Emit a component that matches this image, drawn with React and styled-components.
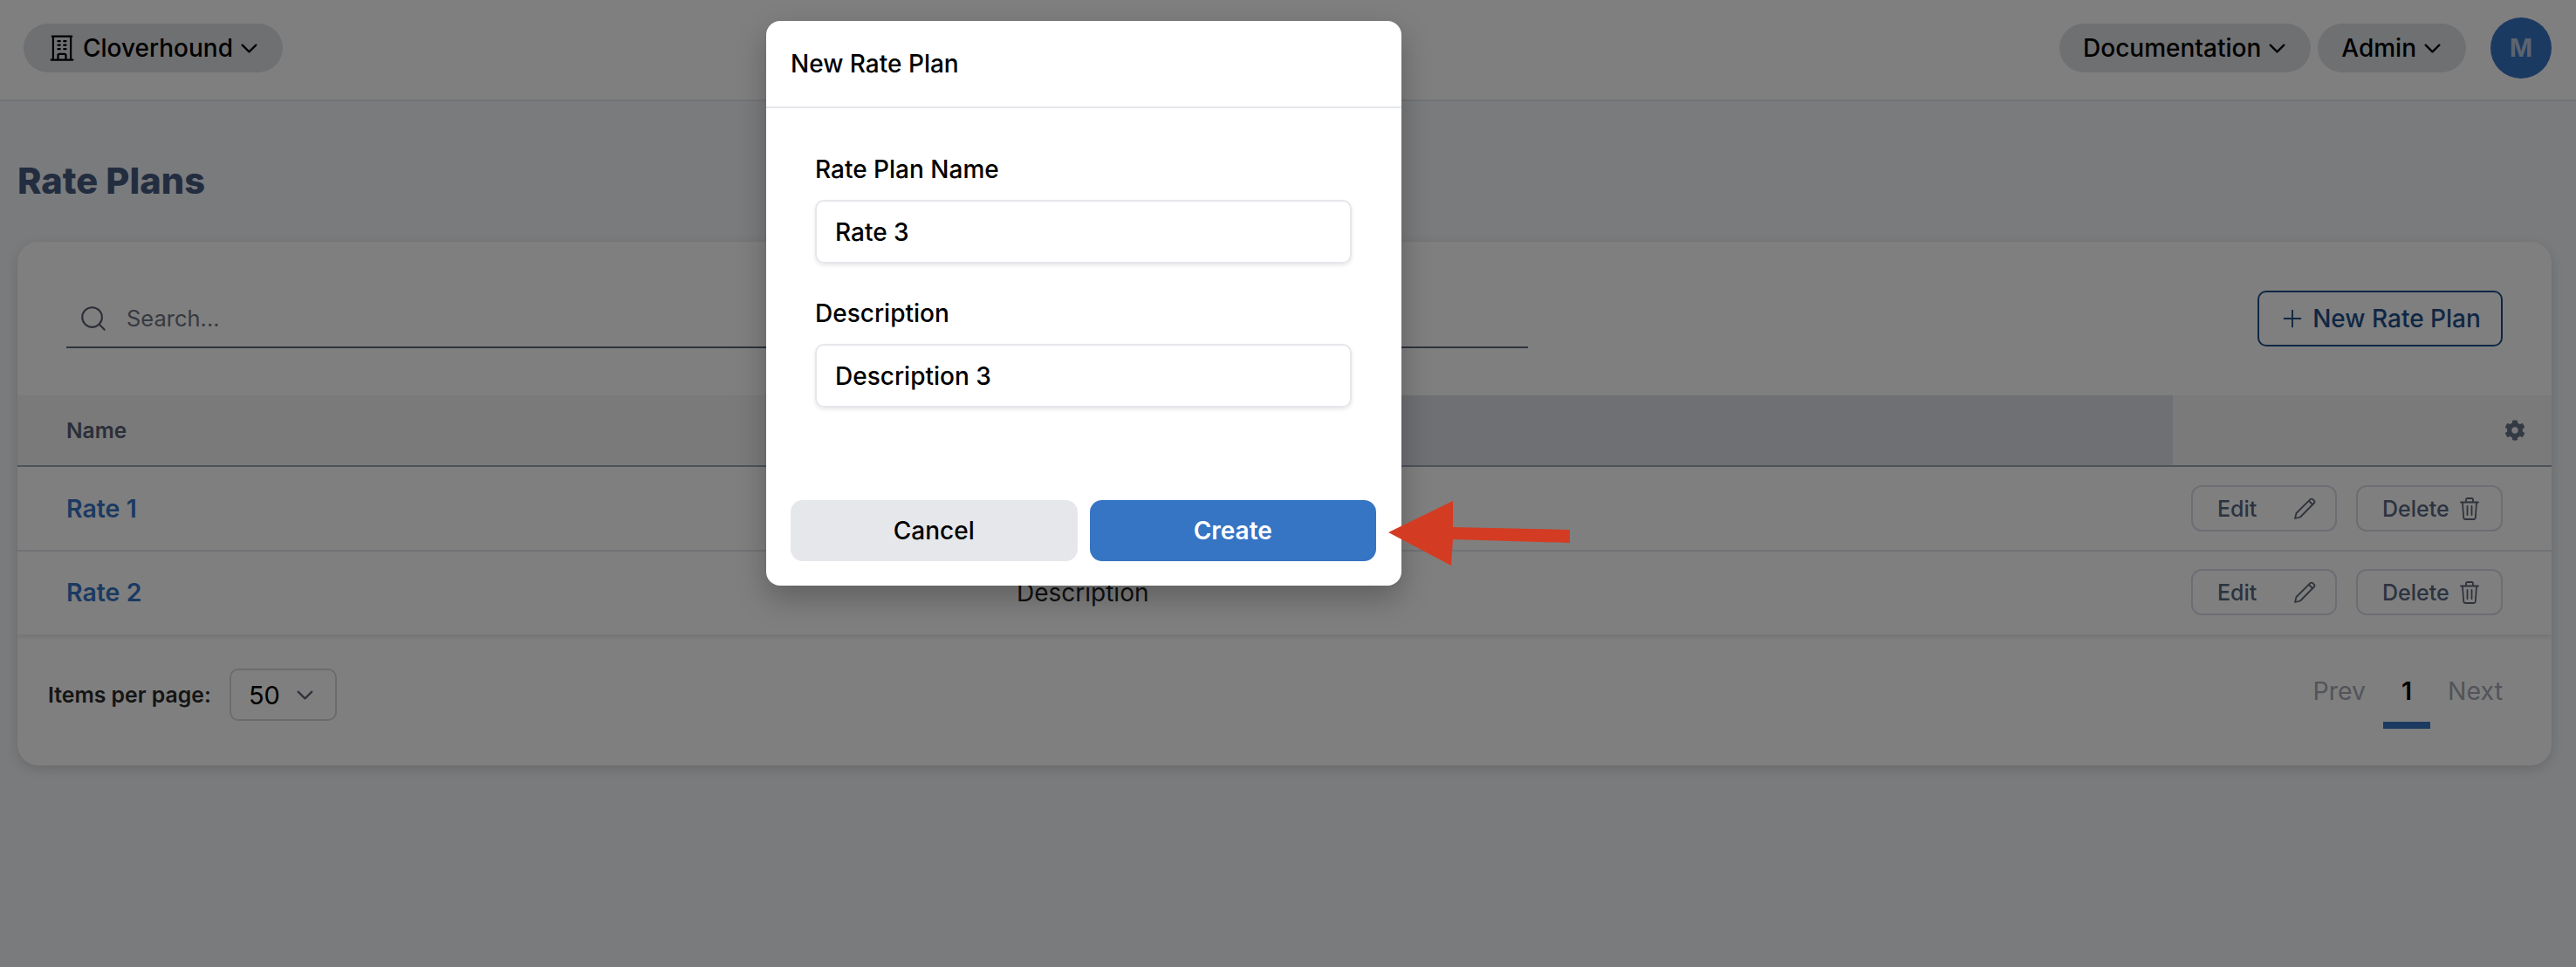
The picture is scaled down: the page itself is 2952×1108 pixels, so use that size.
import React from 'react';
import styled, { createGlobalStyle } from 'styled-components';
import { HiOutlineBuildingOffice, HiOutlineChevronDown, HiOutlinePlus } from 'react-icons/hi2';
import { FaCog } from 'react-icons/fa';
import { Search } from 'lucide-react';

const GlobalStyle = createGlobalStyle`
    html, body {
        margin: 0;
        padding: 0;
        background: #f4f6fa;
        font-family: Inter, "Liberation Sans", sans-serif;
        color: #000;
    }
    * {
        box-sizing: border-box;
    }
`;

const Page = styled.div`
    width: 2952px;
    height: 1108px;
    position: relative;
    overflow: hidden;
`;

// top bar
const TopBar = styled.header`
    height: 116px;
    background: #fff;
    border-bottom: 2px solid #e5e7eb;
    padding: 20px 28px 0 27px;
    display: flex;
    justify-content: space-between;
    align-items: flex-start;
`;
const NavGroup = styled.div`
    display: flex;
    align-items: flex-start;
    gap: 8px;
`;
const Pill = styled.div`
    height: 56px;
    margin-top: 7px;
    padding: 0 26px 0 ${p => p.$left || 27}px;
    border-radius: 28px;
    background: #dfe0e4;
    display: flex;
    align-items: center;
    gap: ${p => p.$gap || 4}px;
    font-size: 28px;
    font-weight: 500;
`;
const Caret = styled(HiOutlineChevronDown)`
    width: 25px;
    height: 25px;
    stroke-width: 2.2;
`;
const Avatar = styled.div`
    width: 70px;
    height: 70px;
    margin-left: 20px;
    border-radius: 50%;
    background: #3674c4;
    color: #b8c8de;
    display: flex;
    align-items: center;
    justify-content: center;
    font-size: 28px;
    font-weight: 700;
`;

const Main = styled.main`
    padding: 0 28px 0 20px;
`;
const Title = styled.h1`
    margin: 0;
    height: 161px;
    padding-top: 65px;
    font-size: 41.6px;
    line-height: 52px;
    font-weight: 800;
    color: #475a80;
`;
const Card = styled.section`
    height: 600px;
    background: #fff;
    border-radius: 24px;
    box-shadow: 0 4px 14px rgba(0, 0, 0, 0.14);
    overflow: hidden;
`;

// search + new button
const Toolbar = styled.div`
    height: 176px;
    padding: 56px 56px 0 56px;
    display: flex;
    justify-content: space-between;
    align-items: flex-start;
`;
const SearchBox = styled.div`
    width: 1675px;
    height: 66px;
    padding: 0 0 1px 14px;
    border-bottom: 2px solid #5a6678;
    display: flex;
    align-items: center;
    gap: 21px;
    font-size: 25.5px;
    color: #6f7480;
`;
const NewButton = styled.button`
    width: 281px;
    height: 64px;
    border: 2px solid #1e4e88;
    border-radius: 10px;
    background: #fff;
    color: #1e4e88;
    font-family: inherit;
    font-size: 28px;
    font-weight: 500;
    display: flex;
    align-items: center;
    justify-content: center;
    gap: 8px;
`;

// table
const Table = styled.div`
    box-shadow: 0 3px 6px rgba(0, 0, 0, 0.1);
`;
const HeadRow = styled.div`
    height: 82px;
    display: grid;
    grid-template-columns: 1090px 1380px 1fr;
    border-bottom: 2px solid #9aa5b4;
    background: #f4f5f7;
`;
const HeadCell = styled.div`
    padding: 0 30px 0 56px;
    display: flex;
    align-items: center;
    justify-content: ${p => (p.$end ? 'flex-end' : 'flex-start')};
    background: ${p => (p.$sorted ? '#dfe0e6' : 'transparent')};
    font-size: 24.5px;
    font-weight: 600;
    color: #555e70;
`;
const Row = styled.div`
    height: ${p => (p.$last ? 95 : 97)}px;
    display: grid;
    grid-template-columns: 1090px 1fr auto;
    align-items: center;
    border-bottom: 2px solid ${p => (p.$last ? 'transparent' : '#e3e5ea')};
`;
const RateLink = styled.a`
    padding-left: 56px;
    font-size: 28.5px;
    font-weight: 600;
    color: #3674c4;
`;
const DescCell = styled.div`
    padding-left: 55px;
    font-size: 28px;
    color: #222;
`;
const Actions = styled.div`
    padding-right: 56px;
    display: flex;
    gap: 22px;
`;
const ActionButton = styled.button`
    width: ${p => (p.$wide ? 168 : 167)}px;
    height: 53px;
    padding: 0 ${p => p.$pad}px 0 28px;
    border: 2px solid #d8dce6;
    border-radius: 12px;
    background: #fff;
    color: #586680;
    font-family: inherit;
    font-size: 25px;
    font-weight: 500;
    display: flex;
    align-items: center;
    justify-content: space-between;
`;

// footer
const Footer = styled.div`
    padding: 39px 56px 0 35px;
    display: flex;
    justify-content: space-between;
    align-items: flex-start;
`;
const PerPage = styled.div`
    display: flex;
    align-items: center;
    gap: 21px;
    font-size: 24.8px;
    font-weight: 600;
    color: #2a2a2a;
`;
const Select = styled.div`
    width: 123px;
    height: 60px;
    padding: 0 22px 0 20px;
    border: 2px solid #d6d8de;
    border-radius: 10px;
    display: flex;
    align-items: center;
    justify-content: space-between;
    font-size: 29px;
    font-weight: 400;
    color: #000;
    svg {
        color: #5f6675;
    }
`;
const Pager = styled.div`
    display: flex;
    align-items: flex-start;
    gap: 20px;
    font-size: 28.5px;
    color: #a5a9b2;
`;
const PageItem = styled.div`
    height: 69px;
    padding: 8px 0 0;
    line-height: 36px;
    width: ${p => (p.$active ? '54px' : 'auto')};
    text-align: center;
    color: ${p => (p.$active ? '#000' : 'inherit')};
    font-weight: ${p => (p.$active ? 600 : 400)};
    border-bottom: 8px solid ${p => (p.$active ? '#3674c4' : 'transparent')};
`;

// modal
const Overlay = styled.div`
    position: absolute;
    inset: 0;
    background: rgba(0, 0, 0, 0.5);
`;
const Modal = styled.div`
    position: absolute;
    left: 878px;
    top: 24px;
    width: 728px;
    height: 647px;
    background: #fff;
    border-radius: 16px;
    box-shadow: 0 14px 34px rgba(0, 0, 0, 0.25);
    display: flex;
    flex-direction: column;
`;
const ModalHeader = styled.div`
    height: 100px;
    padding: 0 28px;
    border-bottom: 2px solid #e5e7eb;
    display: flex;
    align-items: center;
    font-size: 28px;
    font-weight: 450;
`;
const ModalBody = styled.div`
    flex: 1;
    padding: 52px 57px 0 56px;
    display: flex;
    flex-direction: column;
`;
const Label = styled.label`
    height: 36px;
    line-height: 36px;
    margin-bottom: 17px;
    font-size: 28px;
    font-weight: 450;
`;
const Input = styled.div`
    height: 73px;
    margin-bottom: 39px;
    padding: 0 21px;
    border: 2px solid #e5e7eb;
    border-radius: 10px;
    box-shadow: 0 2px 4px rgba(0, 0, 0, 0.1);
    display: flex;
    align-items: center;
    font-size: 28px;
    font-weight: 450;
`;
const ModalFooter = styled.div`
    padding: 0 29px 28px 28px;
    display: grid;
    grid-template-columns: 1fr 1fr;
    gap: 14px;
`;
const ModalButton = styled.button`
    height: 70px;
    border: none;
    border-radius: 14px;
    background: ${p => (p.$primary ? '#3674c4' : '#e5e7eb')};
    color: ${p => (p.$primary ? '#fff' : '#000')};
    font-family: inherit;
    font-size: 28px;
    font-weight: ${p => (p.$primary ? 600 : 500)};
`;
const Arrow = styled.svg`
    position: absolute;
    left: 1585px;
    top: 565px;
`;

const PencilIcon = () => (
    <svg width="28" height="28" viewBox="0 0 28 28" fill="none" stroke="#5f6675" strokeWidth="1.8" strokeLinejoin="round">
        <path d="M3 25l1.5-6L20.5 3.2c.8-.8 2-.8 2.8 0l1.5 1.5c.8.8.8 2 0 2.8L9 23.5 3 25z" />
        <path d="M19 5l4 4" />
    </svg>
);

const TrashIcon = () => (
    <svg width="24" height="28" viewBox="0 0 24 28" fill="none" stroke="#5f6675" strokeWidth="1.8" strokeLinecap="round" strokeLinejoin="round">
        <path d="M2 6.5h20M8 6V3.5c0-.8.6-1.5 1.5-1.5h5c.9 0 1.5.7 1.5 1.5V6" />
        <path d="M4 7l1.2 17c.1 1.2 1 2 2.2 2h9.2c1.2 0 2.1-.8 2.2-2L20 7" />
        <path d="M9.5 11v10M14.5 11v10" />
    </svg>
);

const rows = ['Rate 1', 'Rate 2'];

export default function App() {
    return (
        <Page>
            <GlobalStyle />
            <TopBar>
                <NavGroup>
                    <Pill $left={26} $gap={6}>
                        <HiOutlineBuildingOffice size={36} />
                        <span>Cloverhound</span>
                        <Caret />
                    </Pill>
                </NavGroup>
                <NavGroup>
                    <Pill $gap={6}>
                        <span>Documentation</span>
                        <Caret />
                    </Pill>
                    <Pill $gap={6}>
                        <span>Admin</span>
                        <Caret />
                    </Pill>
                    <Avatar>M</Avatar>
                </NavGroup>
            </TopBar>

            <Main>
                <Title>Rate Plans</Title>
                <Card>
                    <Toolbar>
                        <SearchBox>
                            <Search size={34} strokeWidth={1.5} color="#5a6070" />
                            <span>Search...</span>
                        </SearchBox>
                        <NewButton>
                            <HiOutlinePlus size={30} />
                            New Rate Plan
                        </NewButton>
                    </Toolbar>

                    <Table>
                        <HeadRow>
                            <HeadCell>Name</HeadCell>
                            <HeadCell $sorted>Description</HeadCell>
                            <HeadCell $end>
                                <FaCog size={24} color="#687488" />
                            </HeadCell>
                        </HeadRow>
                        {rows.map((name, i) => (
                            <Row key={name} $last={i === rows.length - 1}>
                                <RateLink>{name}</RateLink>
                                <DescCell>Description</DescCell>
                                <Actions>
                                    <ActionButton $pad={21}>
                                        Edit
                                        <PencilIcon />
                                    </ActionButton>
                                    <ActionButton $pad={24} $wide>
                                        Delete
                                        <TrashIcon />
                                    </ActionButton>
                                </Actions>
                            </Row>
                        ))}
                    </Table>

                    <Footer>
                        <PerPage>
                            Items per page:
                            <Select>
                                50
                                <Caret />
                            </Select>
                        </PerPage>
                        <Pager>
                            <PageItem>Prev</PageItem>
                            <PageItem $active>1</PageItem>
                            <PageItem>Next</PageItem>
                        </Pager>
                    </Footer>
                </Card>
            </Main>

            <Overlay />

            <Modal>
                <ModalHeader>New Rate Plan</ModalHeader>
                <ModalBody>
                    <Label>Rate Plan Name</Label>
                    <Input>Rate 3</Input>
                    <Label>Description</Label>
                    <Input>Description 3</Input>
                </ModalBody>
                <ModalFooter>
                    <ModalButton>Cancel</ModalButton>
                    <ModalButton $primary>Create</ModalButton>
                </ModalFooter>
            </Modal>

            <Arrow width="220" height="90" viewBox="0 0 220 90">
                <path d="M6 45L80 9l0 30L214 42v15L80 53l-2 30z" fill="#d33c22" />
            </Arrow>
        </Page>
    );
}
